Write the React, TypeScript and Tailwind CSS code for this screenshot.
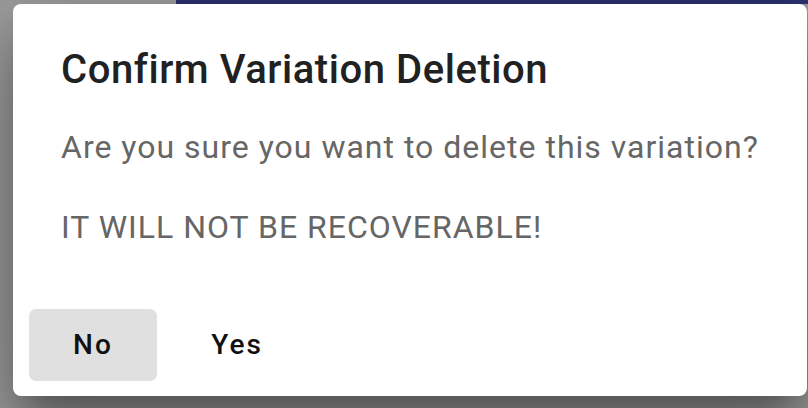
import React from "react";

export default function App() {
  return (
    <div
      className="w-[808px] h-[408px] overflow-hidden bg-[#a0a0a0] flex flex-col"
      style={{ fontFamily: "Roboto, 'Liberation Sans', sans-serif" }}
    >
      <div className="flex h-[4px] shrink-0">
        <div className="w-[176px] bg-[#9f9f9f]" />
        <div className="flex-1 bg-[#2c3272]" />
      </div>
      <div className="flex pl-[13px]">
        <div className="w-[794px] bg-white rounded-[8px] shadow-[0_22px_30px_-14px_rgba(0,0,0,0.3),0_48px_76px_6px_rgba(0,0,0,0.2),0_18px_92px_16px_rgba(0,0,0,0.18)] flex flex-col pt-[42px] pb-[15px]">
          <h2 className="pl-[48px] text-[40px] leading-[48px] font-medium text-[#212121] tracking-[0.55px]">
            Confirm Variation Deletion
          </h2>
          <div className="pl-[48px] mt-[29px] flex flex-col gap-[32px] text-[32px] leading-[48px] text-[#666666] tracking-[1px]">
            <p>Are you sure you want to delete this variation?</p>
            <p>IT WILL NOT BE RECOVERABLE!</p>
          </div>
          <div className="mt-[58px] pl-[16px] flex gap-[16px]">
            <button className="w-[128px] h-[72px] rounded-[7px] bg-[#e0e0e0] text-[28px] font-medium text-[#111111] tracking-[2px]">
              No
            </button>
            <button className="w-[128px] h-[72px] rounded-[7px] text-[28px] font-medium text-[#111111] tracking-[2px]">
              Yes
            </button>
          </div>
        </div>
      </div>
    </div>
  );
}
